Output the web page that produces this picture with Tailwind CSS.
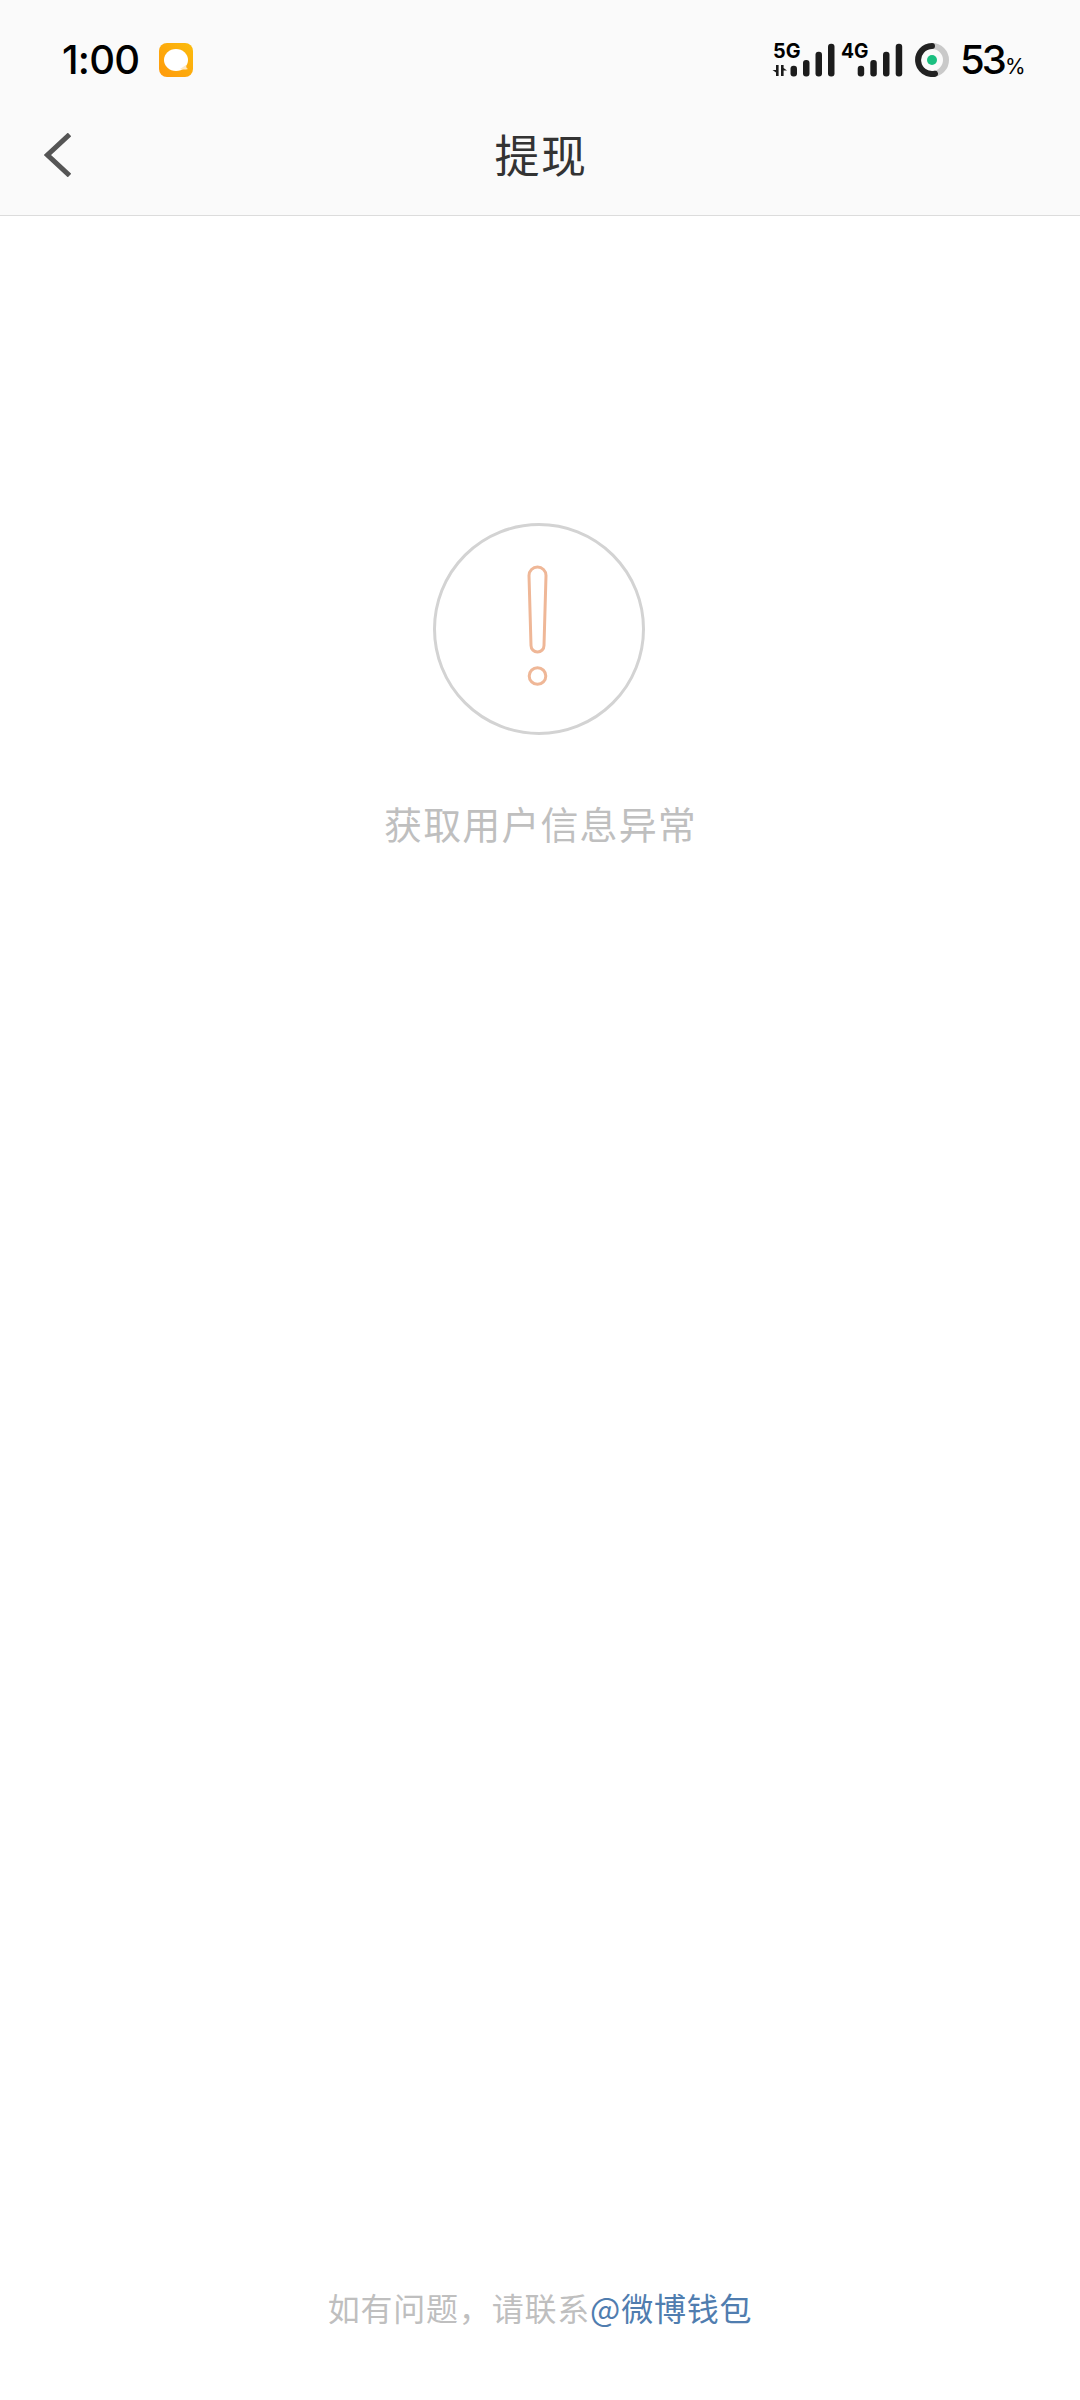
<!DOCTYPE html>
<html lang="zh-CN">
<head>
    <meta charset="UTF-8">
    <meta name="viewport" content="width=device-width, initial-scale=1.0">
    <title>提现</title>
    <script src="https://cdn.jsdelivr.net/npm/@tailwindcss/browser@4"></script>
</head>
<body class="bg-white h-[2400px] flex flex-col font-['Noto_Sans_CJK_SC',sans-serif]">
    <header class="h-[216px] shrink-0 bg-[#fafafa] border-b border-[#dcdcdc]">
        <!-- Status bar -->
        <div class="h-[120px] pl-[62px] pr-[56px] flex items-center justify-between font-[Inter,sans-serif] text-black">
            <div class="flex items-center">
                <span class="w-[97px] text-[40px] leading-none font-medium tracking-[-0.8px]">1:00</span>
                <svg class="w-[34px] h-[34px]" viewBox="0 0 34 34">
                    <defs>
                        <linearGradient id="msg" x1="1" y1="0" x2="0" y2="1">
                            <stop offset="0" stop-color="#fbbc0c"/>
                            <stop offset="1" stop-color="#ff990c"/>
                        </linearGradient>
                    </defs>
                    <rect width="34" height="34" rx="8" fill="url(#msg)"/>
                    <ellipse cx="17" cy="17" rx="12" ry="11" fill="#fff"/>
                    <path d="M21 26 L27 22 Q27 25 29 26 Q25 27 21 26Z" fill="#ffe9c4"/>
                </svg>
            </div>
            <div class="flex items-center">
                <svg class="w-[130px] h-[36px] overflow-visible" viewBox="0 0 130 36" fill="#1c1c1c">
                    <text x="0" y="16" font-size="20" font-weight="700" textLength="27.5" lengthAdjust="spacingAndGlyphs" fill="#000">5G</text>
                    <path d="M3 23 h2.600 v11 h-2.600 v-3.500 l-3.500 -2.500 h3.500z M8 23 h2.600 v3 l3.400 2.500 h-3.400 v5.500 h-2.600z"/>
                    <rect x="17.500" y="23.800" width="6.500" height="10.700" rx="3"/>
                    <rect x="30" y="18" width="6.500" height="16.500" rx="3"/>
                    <rect x="42.500" y="9.800" width="6.500" height="24.700" rx="3"/>
                    <rect x="55" y="1.700" width="6.500" height="32.800" rx="3"/>
                    <text x="68" y="16" font-size="20" font-weight="700" textLength="27.5" lengthAdjust="spacingAndGlyphs" fill="#000">4G</text>
                    <rect x="84.700" y="23.800" width="6.500" height="10.700" rx="3"/>
                    <rect x="97.300" y="18" width="6.500" height="16.500" rx="3"/>
                    <rect x="110" y="9.800" width="6.500" height="24.700" rx="3"/>
                    <rect x="122.700" y="1.700" width="6.500" height="32.800" rx="3"/>
                </svg>
                <svg class="w-[34px] h-[34px] ml-[12px]" viewBox="0 0 34 34" fill="none" stroke-width="6">
                    <circle cx="17" cy="17" r="14" stroke="#c9c9c9"/>
                    <path d="M17 3 A14 14 0 1 0 20 30.700" stroke="#222" stroke-linecap="round"/>
                    <circle cx="17" cy="17" r="5" fill="#1bbf80"/>
                </svg>
                <div class="ml-[11px] flex items-baseline leading-none">
                    <span class="w-[45px] text-[40px] font-medium tracking-[-3px]">53</span>
                    <span class="w-[19px] text-[21px]">%</span>
                </div>
            </div>
        </div>
        <!-- Title bar -->
        <div class="h-[70px] grid grid-cols-[1fr_auto_1fr] items-center">
            <svg class="ml-[44px] w-[27px] h-[44px]" viewBox="0 0 27 44" fill="none" stroke="#555" stroke-width="5">
                <path d="M25.500 1.500 L3.500 22 L25.500 42.500"/>
            </svg>
            <h1 class="pl-[2px] pb-[3px] text-[45px] leading-[67px] tracking-[1.5px] text-[#333]">提现</h1>
        </div>
    </header>

    <main class="grow flex flex-col items-center pt-[307px]">
        <svg class="w-[212px] h-[212px] mr-[2px]" viewBox="0 0 212 212" fill="none" stroke-width="3">
            <circle cx="106" cy="106" r="104.500" stroke="#d3d3d3"/>
            <g stroke="#efb797">
                <path d="M96 52.500 A8.500 8.500 0 0 1 113 52.500 L111 122.500 A6.500 6.500 0 0 1 98 122.500 Z"/>
                <circle cx="104.500" cy="153" r="8.300"/>
            </g>
        </svg>
        <p class="mt-[60px] pl-[1px] text-[38px] leading-[56px] tracking-[1.100px] text-[#bfbfbf]">获取用户信息异常</p>
    </main>

    <footer class="h-[116px] shrink-0 text-center text-[32px] leading-[46px] tracking-[0.800px] text-[#bfbfbf]">
        如有问题，请联系<a class="text-[#507daf]">@微博钱包</a>
    </footer>
</body>
</html>
